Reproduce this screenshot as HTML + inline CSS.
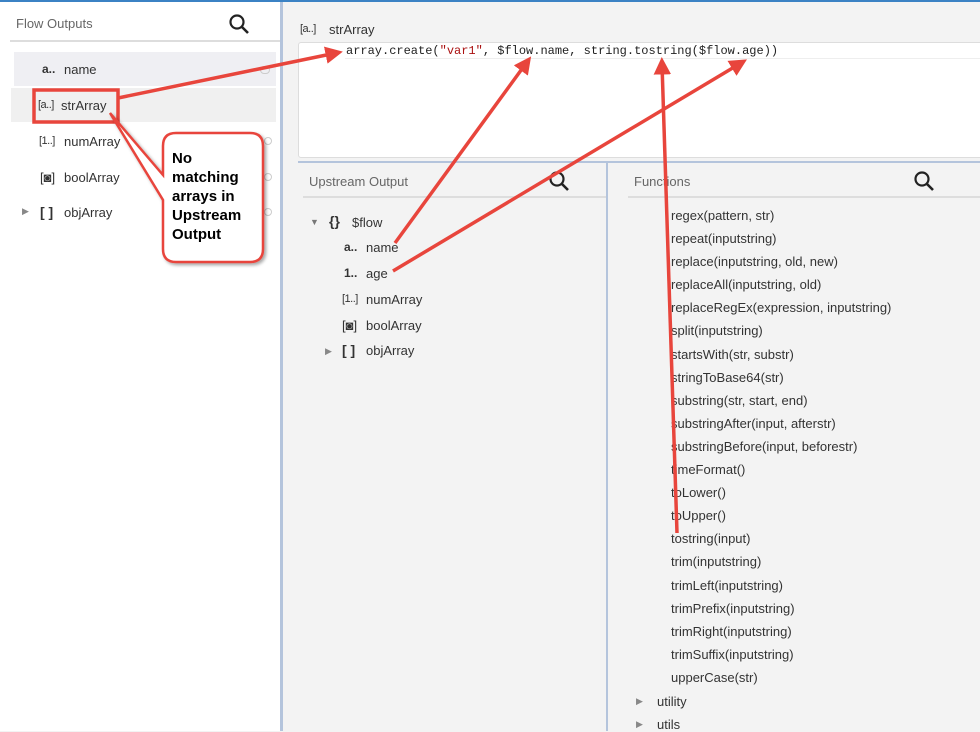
<!DOCTYPE html>
<html><head><meta charset="utf-8"><style>
*{margin:0;padding:0;box-sizing:border-box}
body{width:980px;height:731px;overflow:hidden;background:#f3f3f3;font-family:"Liberation Sans","DejaVu Sans",sans-serif;position:relative;color:#333}
.abs{position:absolute}
.t{font-size:13px;color:#333;white-space:nowrap}
.hdr{font-size:13px;color:#666}
.mono{font-family:"Liberation Mono","DejaVu Sans Mono",monospace;font-size:12px;color:#222;white-space:nowrap}
.ic{font-size:12px;font-weight:bold;color:#333}
.bi{font-size:11px;color:#333;white-space:nowrap;letter-spacing:-0.5px}
</style></head><body>
<div class="abs" style="left:0;top:0;width:980px;height:2px;background:#3b82c4"></div>
<div class="abs" style="left:0;top:2px;width:280px;height:729px;background:#fff"></div>
<div class="abs" style="left:280px;top:2px;width:3px;height:729px;background:#b4c4dc"></div>
<div class="abs hdr" style="left:16px;top:16px">Flow Outputs</div>
<svg class="abs" style="left:228px;top:13px" width="22" height="22"><circle cx="9" cy="9" r="6.5" fill="none" stroke="#222" stroke-width="2.2"/><line x1="14" y1="14" x2="20" y2="20" stroke="#222" stroke-width="2.6"/></svg>
<div class="abs" style="left:10px;top:40px;width:270px;height:2px;background:#ddd"></div>
<div class="abs" style="left:14px;top:52px;width:262px;height:34px;background:#efeff3"></div>
<div class="abs" style="left:11px;top:88px;width:265px;height:34px;background:#f0f0f0"></div>
<div class="abs ic" style="left:42px;top:62px">a..</div><div class="abs t" style="left:64px;top:62px">name</div>
<div class="abs bi" style="left:38px;top:99px">[a..]</div><div class="abs t" style="left:61px;top:98px">strArray</div>
<div class="abs bi" style="left:39px;top:135px">[1..]</div><div class="abs t" style="left:64px;top:134px">numArray</div>
<div class="abs t" style="left:40px;top:170px">[◙]</div><div class="abs t" style="left:64px;top:170px">boolArray</div>
<div class="abs t" style="left:22px;top:206px;font-size:9px;color:#888">▶</div>
<div class="abs t" style="left:40px;top:204px;font-weight:bold;font-size:14px">[ ]</div><div class="abs t" style="left:64px;top:205px">objArray</div>
<div class="abs" style="left:260px;top:66px;width:10px;height:8px;border:1px solid #ccc;border-radius:4px"></div>
<div class="abs" style="left:264px;top:137px;width:8px;height:8px;border:1px solid #ccc;border-radius:4px"></div>
<div class="abs" style="left:264px;top:173px;width:8px;height:8px;border:1px solid #ccc;border-radius:4px"></div>
<div class="abs" style="left:264px;top:208px;width:8px;height:8px;border:1px solid #ccc;border-radius:4px"></div>

<div class="abs bi" style="left:300px;top:23px">[a..]</div><div class="abs t" style="left:329px;top:22px">strArray</div>
<div class="abs" style="left:298px;top:42px;width:690px;height:116px;background:#fff;border:1px solid #ddd;border-radius:3px"></div>
<div class="abs" style="left:345px;top:43px;width:640px;height:16px;border-bottom:1px solid #eee"></div>
<div class="abs mono" style="left:346px;top:44px">array.create(<span style="color:#a11">"var1"</span>, $flow.name, string.tostring($flow.age))</div>
<div class="abs" style="left:298px;top:161px;width:682px;height:2px;background:#b4c4dc"></div>
<div class="abs" style="left:606px;top:161px;width:2px;height:570px;background:#b4c4dc"></div>
<div class="abs hdr" style="left:309px;top:174px">Upstream Output</div>
<svg class="abs" style="left:548px;top:170px" width="22" height="22"><circle cx="9" cy="9" r="6.5" fill="none" stroke="#222" stroke-width="2.2"/><line x1="14" y1="14" x2="20" y2="20" stroke="#222" stroke-width="2.6"/></svg>
<div class="abs" style="left:303px;top:196px;width:303px;height:2px;background:#ddd"></div>
<div class="abs t" style="left:310px;top:217px;font-size:9px;color:#777">▼</div>
<div class="abs t" style="left:329px;top:213px;font-weight:bold;font-size:14px">{}</div><div class="abs t" style="left:352px;top:215px">$flow</div>
<div class="abs ic" style="left:344px;top:240px">a..</div><div class="abs t" style="left:366px;top:240px">name</div>
<div class="abs ic" style="left:344px;top:266px">1..</div><div class="abs t" style="left:366px;top:266px">age</div>
<div class="abs bi" style="left:342px;top:293px">[1..]</div><div class="abs t" style="left:366px;top:292px">numArray</div>
<div class="abs t" style="left:342px;top:318px">[◙]</div><div class="abs t" style="left:366px;top:318px">boolArray</div>
<div class="abs t" style="left:325px;top:346px;font-size:9px;color:#888">▶</div>
<div class="abs t" style="left:342px;top:342px;font-weight:bold;font-size:14px">[ ]</div><div class="abs t" style="left:366px;top:343px">objArray</div>

<div class="abs hdr" style="left:634px;top:174px">Functions</div>
<svg class="abs" style="left:913px;top:170px" width="22" height="22"><circle cx="9" cy="9" r="6.5" fill="none" stroke="#222" stroke-width="2.2"/><line x1="14" y1="14" x2="20" y2="20" stroke="#222" stroke-width="2.6"/></svg>
<div class="abs" style="left:628px;top:196px;width:352px;height:2px;background:#ddd"></div>
<div class="abs t" style="left:671px;top:204px;line-height:23.1px">regex(pattern, str)<br>repeat(inputstring)<br>replace(inputstring, old, new)<br>replaceAll(inputstring, old)<br>replaceRegEx(expression, inputstring)<br>split(inputstring)<br>startsWith(str, substr)<br>stringToBase64(str)<br>substring(str, start, end)<br>substringAfter(input, afterstr)<br>substringBefore(input, beforestr)<br>timeFormat()<br>toLower()<br>toUpper()<br>tostring(input)<br>trim(inputstring)<br>trimLeft(inputstring)<br>trimPrefix(inputstring)<br>trimRight(inputstring)<br>trimSuffix(inputstring)<br>upperCase(str)</div>
<div class="abs t" style="left:636px;top:696px;font-size:9px;color:#888">▶</div><div class="abs t" style="left:657px;top:694px">utility</div>
<div class="abs t" style="left:636px;top:719px;font-size:9px;color:#888">▶</div><div class="abs t" style="left:657px;top:717px">utils</div>

<svg class="abs" style="left:0;top:0" width="980" height="731">
<defs><marker id="a" markerWidth="5" markerHeight="5" refX="3" refY="2.5" orient="auto"><path d="M0,0 L5,2.5 L0,5 Z" fill="#e8453c"/></marker>
<filter id="s"><feDropShadow dx="2" dy="2" stdDeviation="1.5" flood-opacity="0.35"/></filter></defs>
<g stroke="#e8453c" stroke-width="3.5" fill="none">
<line x1="118" y1="98" x2="336" y2="53" marker-end="url(#a)"/>
<line x1="395" y1="243" x2="527" y2="62" marker-end="url(#a)"/>
<line x1="393" y1="271" x2="741" y2="63" marker-end="url(#a)"/>
<line x1="677" y1="533" x2="662" y2="64" marker-end="url(#a)"/>
<rect x="34" y="90" width="84" height="32"/>
</g>
<path d="M180,133 H250 Q263,133 263,146 V249 Q263,262 250,262 H176 Q163,262 163,249 V200 L110,113 L163,175 V146 Q163,133 176,133 Z" fill="#fff" stroke="#e8453c" stroke-width="2.5" filter="url(#s)"/>
<text x="172" y="163" font-family="Liberation Sans, sans-serif" font-weight="bold" font-size="15" fill="#000">No</text>
<text x="172" y="182" font-family="Liberation Sans, sans-serif" font-weight="bold" font-size="15" fill="#000">matching</text>
<text x="172" y="201" font-family="Liberation Sans, sans-serif" font-weight="bold" font-size="15" fill="#000">arrays in</text>
<text x="172" y="220" font-family="Liberation Sans, sans-serif" font-weight="bold" font-size="15" fill="#000">Upstream</text>
<text x="172" y="239" font-family="Liberation Sans, sans-serif" font-weight="bold" font-size="15" fill="#000">Output</text>
</svg>
</body></html>
